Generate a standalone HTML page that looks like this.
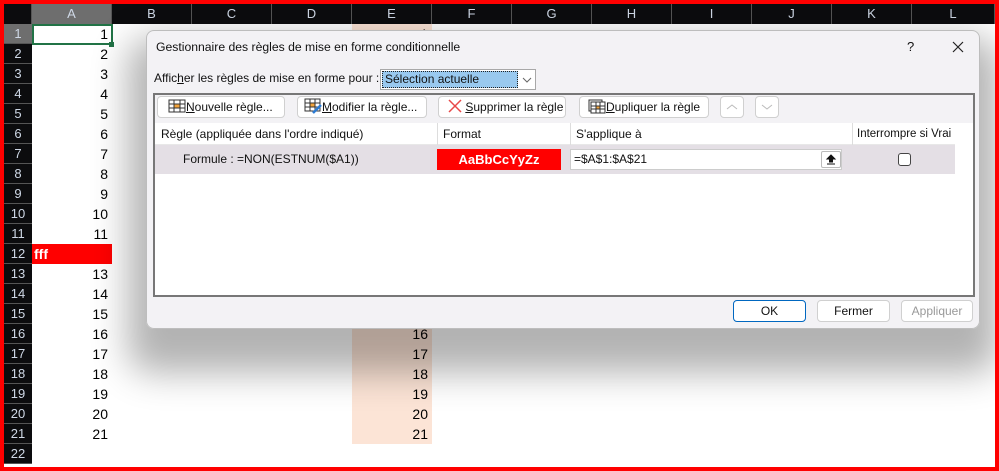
<!DOCTYPE html>
<html><head><meta charset="utf-8"><style>
*{margin:0;padding:0;box-sizing:border-box}
body{width:999px;height:471px;overflow:hidden;background:#fff;font-family:"Liberation Sans",sans-serif;position:relative}
.a{position:absolute;white-space:nowrap}
.ch{position:absolute;top:4px;height:20px;background:#0c0c0e;color:#cfd8e6;font-size:13px;text-align:center;line-height:20px;border-right:1px solid #555}
.rh{position:absolute;left:4px;width:28px;height:20px;background:#0c0c0e;color:#cfd8e6;font-size:13px;text-align:center;line-height:20px;border-bottom:1px solid #555}
.c{position:absolute;left:32px;width:80px;height:20px;font-size:14px;text-align:right;padding-right:4px;line-height:20px;color:#000}
.e{position:absolute;left:352px;width:80px;height:20px;background:#fce4d6;font-size:14px;text-align:right;padding-right:4px;line-height:20px}
.btn{position:absolute;height:22px;border:1px solid #d0d0d0;border-radius:4px;background:#fff;font-size:12px;line-height:20px;color:#111;white-space:nowrap}
.dlg{font-size:12px;color:#111}
u{text-decoration:underline}
</style></head><body>
<div class="ch" style="left:4px;width:28px;"></div>
<div class="ch" style="left:32px;width:80px;background:#6e6e6e;">A</div>
<div class="ch" style="left:112px;width:80px">B</div>
<div class="ch" style="left:192px;width:80px">C</div>
<div class="ch" style="left:272px;width:80px">D</div>
<div class="ch" style="left:352px;width:80px">E</div>
<div class="ch" style="left:432px;width:80px">F</div>
<div class="ch" style="left:512px;width:80px">G</div>
<div class="ch" style="left:592px;width:80px">H</div>
<div class="ch" style="left:672px;width:80px">I</div>
<div class="ch" style="left:752px;width:80px">J</div>
<div class="ch" style="left:832px;width:80px">K</div>
<div class="ch" style="left:912px;width:83px">L</div>
<div id="rows"></div>
<script>
var h='';
for(var i=1;i<=22;i++){var y=24+(i-1)*20;
h+='<div class="rh" style="top:'+y+'px;'+(i==1?'background:#6e6e6e;':'')+'">'+i+'</div>';
if(i<=21){ if(i==12) h+='<div class="c" style="top:'+y+'px;background:#f00;color:#fff;font-weight:bold;text-align:left;padding-left:2px">fff</div>';
else h+='<div class="c" style="top:'+y+'px">'+i+'</div>';
h+='<div class="e" style="top:'+y+'px">'+i+'</div>';}
}
document.getElementById('rows').innerHTML=h;
</script>
<div class="a" style="left:32px;top:24px;width:81px;height:21px;border:2px solid #217346"></div>
<div class="a" style="left:109px;top:42px;width:5px;height:5px;background:#217346"></div>
<div class="a" style="left:146px;top:30px;width:834px;height:299px;border-radius:8px;box-shadow:0 26px 36px 18px rgba(0,0,0,0.3)"></div>
<div class="a dlg" style="left:146px;top:30px;width:834px;height:299px;background:#f3f2f5;border:1px solid #bdbdbd;border-radius:8px">
 <div class="a" style="left:9px;top:9px;font-size:12.2px">Gestionnaire des règles de mise en forme conditionnelle</div>
 <div class="a" style="left:760px;top:8px;font-size:13px">?</div>
 <svg class="a" style="left:805px;top:10px" width="12" height="12"><path d="M1 1L11 11M11 1L1 11" stroke="#222" stroke-width="1.2"/></svg>
 <div class="a" style="left:7px;top:40px">Affic<u>h</u>er les règles de mise en forme pour :</div>
 <div class="a" style="left:233px;top:38px;width:156px;height:21px;border:1px solid #a8a8a8;background:#fff">
  <div class="a" style="left:1px;top:1px;width:136px;height:17px;background:#99c9ef;border:1px dotted #222;padding-left:2px;line-height:15px">Sélection actuelle</div>
  <svg class="a" style="left:138px;top:1px" width="16" height="17"><path d="M4 7L8 11L12 7" stroke="#666" fill="none"/></svg>
 </div>
 <div class="a" style="left:6px;top:62px;width:822px;height:204px;border:2px solid #777;background:#f3f2f5">
  <div class="a" style="left:0;top:28px;width:818px;height:172px;background:#fff"></div>
  <div class="a" style="left:0;top:28px;width:800px;height:22px;border-bottom:1px solid #e8e8e8;line-height:22px">
   <span class="a" style="left:6px">Règle (appliquée dans l'ordre indiqué)</span>
   <span class="a" style="left:282px;top:0;height:22px;border-left:1px solid #ddd;padding-left:5px">Format</span>
   <span class="a" style="left:415px;top:0;height:22px;border-left:1px solid #ddd;padding-left:5px">S'applique à</span>
   <span class="a" style="left:697px;top:0;height:22px;border-left:1px solid #ddd;padding-left:4px;font-size:11.5px">Interrompre si Vrai</span>
  </div>
  <div class="a" style="left:0;top:50px;width:800px;height:29px;background:#e4dfe5">
   <span class="a" style="left:28px;top:7px">Formule : =NON(ESTNUM($A1))</span>
   <div class="a" style="left:282px;top:4px;width:124px;height:21px;background:#f00;color:#fff;font-weight:bold;font-size:13px;text-align:center;line-height:21px">AaBbCcYyZz</div>
   <div class="a" style="left:415px;top:4px;width:272px;height:21px;background:#fff;border:1px solid #ccc;padding-left:3px;line-height:19px">=$A$1:$A$21
    <div class="a" style="left:250px;top:1px;width:20px;height:17px;border:1px solid #bbb;border-radius:2px;background:#fff">
     <svg width="18" height="15"><path d="M9 3L5 7H7.5V10H10.5V7H13Z M5 12H13" fill="#111" stroke="#111" stroke-width="1"/></svg></div></div>
   <div class="a" style="left:743px;top:8px;width:13px;height:13px;border:1px solid #444;border-radius:3px;background:#fff"></div>
  </div>
 </div>
 <div class="btn" style="left:10px;top:65px;width:128px;padding-left:10px">
  <svg width="18" height="14" style="vertical-align:-2px"><rect x="1" y="1" width="16" height="12" fill="#fff" stroke="#333"/><rect x="6" y="5" width="6" height="4" fill="#f3a33a"/><path d="M1 5H17M1 9H17M6 1V13M12 1V13" stroke="#333" fill="none"/></svg><u>N</u>ouvelle règle...</div>
 <div class="btn" style="left:150px;top:65px;width:130px;padding-left:6px">
  <svg width="18" height="16" style="vertical-align:-3px"><rect x="1" y="1" width="15" height="12" fill="#fff" stroke="#333"/><rect x="6" y="5" width="5" height="4" fill="#f3a33a"/><path d="M1 5H16M1 9H16M6 1V13M11 1V13" stroke="#333" fill="none"/><path d="M9 15L17 7" stroke="#2b7bd3" stroke-width="2.5"/></svg><u>M</u>odifier la règle...</div>
 <div class="btn" style="left:291px;top:65px;width:128px;padding-left:9px">
  <svg width="14" height="14" style="vertical-align:-2px"><path d="M1 1L13 13M13 1L1 13" stroke="#e84848" stroke-width="1.5"/></svg> <u>S</u>upprimer la règle</div>
 <div class="btn" style="left:432px;top:65px;width:130px;padding-left:8px">
  <svg width="18" height="15" style="vertical-align:-3px"><rect x="1" y="1" width="13" height="11" fill="none" stroke="#333"/><rect x="3" y="3" width="14" height="11" fill="#fff" stroke="#333"/><rect x="8" y="7" width="4" height="3" fill="#f3a33a"/><path d="M3 7H17M3 10H17M8 3V14M12 3V14" stroke="#333" fill="none"/></svg><u>D</u>upliquer la règle</div>
 <div class="btn" style="left:573px;top:65px;width:24px"><svg width="22" height="20"><path d="M6 12L11 8L16 12" stroke="#bbb" fill="none"/></svg></div>
 <div class="btn" style="left:608px;top:65px;width:24px"><svg width="22" height="20"><path d="M6 8L11 12L16 8" stroke="#bbb" fill="none"/></svg></div>
 <div class="btn" style="left:586px;top:269px;width:73px;text-align:center;border-color:#0067c0">OK</div>
 <div class="btn" style="left:670px;top:269px;width:73px;text-align:center">Fermer</div>
 <div class="btn" style="left:754px;top:269px;width:72px;text-align:center;color:#999">Appliquer</div>
</div>
<div class="a" style="left:0;top:0;width:999px;height:4px;background:#f00"></div>
<div class="a" style="left:0;top:0;width:4px;height:471px;background:#f00"></div>
<div class="a" style="left:995px;top:0;width:4px;height:471px;background:#f00"></div>
<div class="a" style="left:0;top:467px;width:999px;height:4px;background:#f00"></div>
</body></html>
